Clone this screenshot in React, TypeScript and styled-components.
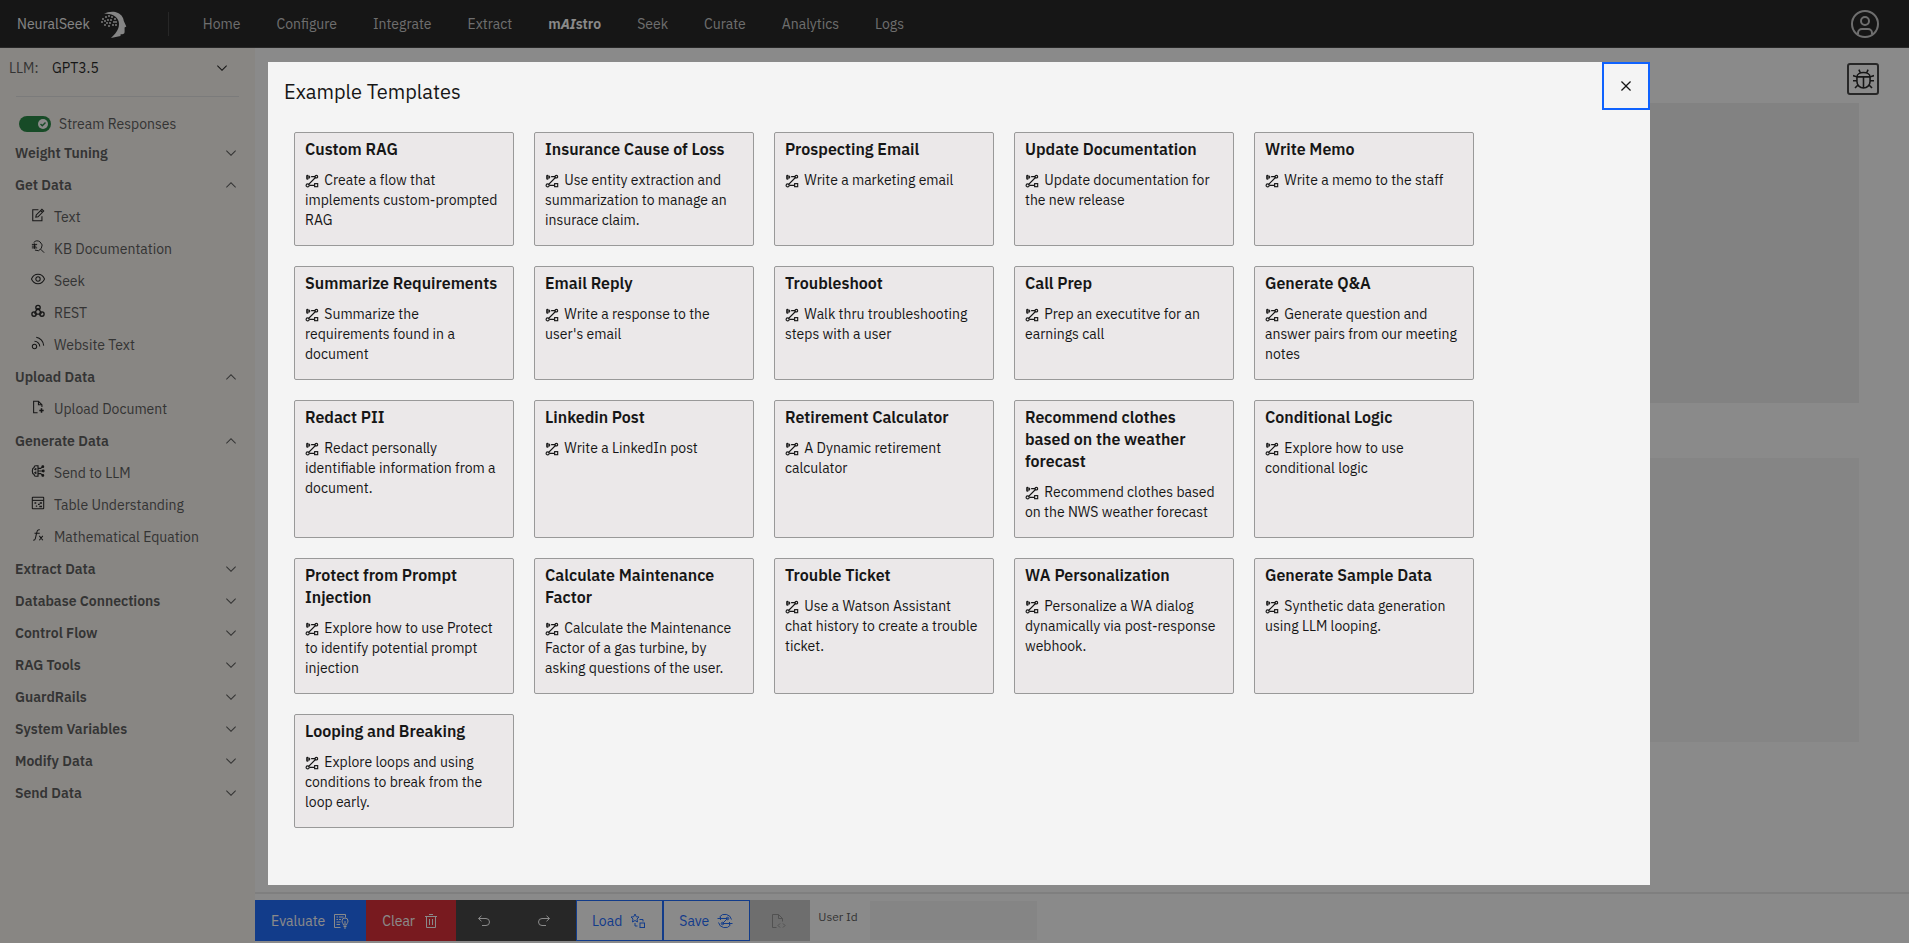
import React, { useState } from "react";
import styled, { createGlobalStyle, css } from "styled-components";

const GlobalStyle = createGlobalStyle`
  *, *::before, *::after { box-sizing: border-box; }
  body { margin: 0; background: #ffffff; }
  body, button, input, select, textarea {
    font-family: "IBM Plex Sans", Roboto, "Liberation Sans", sans-serif;
    font-size: 14px;
  }
  button { border: 0; background: none; padding: 0; color: inherit; cursor: pointer; }
  h2, h3, p, ul { margin: 0; padding: 0; }
  ul { list-style: none; }
`;

/* ---------- icons ---------- */

type IconName =
  | "edit" | "search" | "view" | "webhook" | "rss" | "docAdd" | "model" | "table" | "fx"
  | "evaluate" | "trash" | "undo" | "redo" | "load" | "save" | "docCode"
  | "close" | "down" | "up" | "user" | "bug" | "flow";

const icons: Record<IconName, React.ReactNode> = {
  edit: (
    <g fill="none" stroke="currentColor" strokeWidth="2.4">
      <path d="M17 4H4V29H25V19" />
      <path d="M11 21L12 16L25 3L29 7L16 20Z M22 6L26 10" />
    </g>
  ),
  search: (
    <g fill="none" stroke="currentColor" strokeWidth="2.2">
      <path d="M6 6A11 11 0 1 1 9 23" />
      <path d="M22 21L30 29" />
      <path d="M2 10H14M2 14H12M2 18H14M8 8V20" />
    </g>
  ),
  view: (
    <g fill="none" stroke="currentColor" strokeWidth="2.4">
      <path d="M1 16C4 9 10 5 16 5S28 9 31 16C28 23 22 27 16 27S4 23 1 16Z" />
      <circle cx="16" cy="16" r="5" />
    </g>
  ),
  webhook: (
    <g fill="none" stroke="currentColor" strokeWidth="3">
      <circle cx="16" cy="8" r="5" /><circle cx="7" cy="23" r="5" /><circle cx="25" cy="23" r="5" />
      <path d="M15 9L8 22M17 9L24 22M9 23H23" />
    </g>
  ),
  rss: (
    <g fill="none" stroke="currentColor" strokeWidth="2.4">
      <circle cx="8" cy="24" r="5" />
      <path d="M8 12A12 12 0 0 1 20 24M12 3A20 20 0 0 1 29 22" />
    </g>
  ),
  docAdd: (
    <g fill="none" stroke="currentColor" strokeWidth="2.4">
      <path d="M15 29H6V3H17L25 11V16" /><path d="M17 3V11H25" /><path d="M24 19V29M19 24H29" strokeWidth="3.5" />
    </g>
  ),
  model: (
    <g fill="none" stroke="currentColor" strokeWidth="2.6">
      <path d="M16 4H11C8 4 7 6 7 8C4 9 3 11 3 16S4 23 7 24C7 27 9 28 11 28H16ZM7 12H11M11 9V14M7 20H12M11 17V23" />
      <path d="M16 10H22L27 6M16 16H27M16 22H22L27 26" />
      <g fill="currentColor"><circle cx="27" cy="6" r="2" /><circle cx="28" cy="16" r="2" /><circle cx="27" cy="26" r="2" /></g>
    </g>
  ),
  table: (
    <g fill="none" stroke="currentColor" strokeWidth="2.4">
      <rect x="3" y="3" width="26" height="26" rx="1" /><path d="M3 10H29" />
      <path d="M8 16H12M16 19H20M20 16H25M11 23H14M19 24H25" strokeWidth="3" />
    </g>
  ),
  fx: (
    <g fill="none" stroke="currentColor" strokeWidth="2.4">
      <path d="M20 4H18C15 4 14 6 13.5 9L10 24C9.5 27 8 28 5 28M8 12H20M19 18L27 28M27 18L19 28" />
    </g>
  ),
  evaluate: (
    <g fill="none" stroke="currentColor" strokeWidth="2">
      <path d="M15 29H3V3H25V9" />
      <path d="M7 8H10M12 8H21M7 13H10M12 13H16M7 18H15M7 23H14" />
      <path d="M21 24C21 21 18 20 18 16A6 6 0 0 1 30 16C30 20 27 21 27 24ZM21 27H27M22 30H26M24 16V23" />
    </g>
  ),
  trash: (
    <g fill="currentColor">
      <path d="M12 12H14V24H12ZM18 12H20V24H18ZM12 2H20V4H12Z" />
      <path d="M4 6V8H6V28A2 2 0 0 0 8 30H24A2 2 0 0 0 26 28V8H28V6ZM8 28V8H24V28Z" />
    </g>
  ),
  undo: (
    <path fill="none" stroke="currentColor" strokeWidth="2" d="M11 5.5L5 11L11 16.5M5.5 11H20A7 7 0 0 1 20 25H12" />
  ),
  redo: (
    <path fill="none" stroke="currentColor" strokeWidth="2" d="M21 5.5L27 11L21 16.5M26.5 11H12A7 7 0 0 0 12 25H20" />
  ),
  load: (
    <g fill="none" stroke="currentColor" strokeWidth="2">
      <path d="M10 2L12.5 7.5L18 8L14 12L15 18L10 15L5 18L6 12L2 8L7.5 7.5Z" />
      <path d="M10 20V26H15M19 13H26V17" />
      <rect x="20" y="20" width="9" height="9" />
    </g>
  ),
  save: (
    <g fill="none" stroke="currentColor" strokeWidth="2">
      <path d="M5 8A13.5 13.5 0 0 1 29 13M27 24A13.5 13.5 0 0 1 3 19" />
      <path d="M1 11H21L11 21H31M7 8V14M25 18V24" />
      <circle cx="21" cy="11" r="2.5" /><circle cx="11" cy="21" r="2.5" />
    </g>
  ),
  docCode: (
    <g fill="none" stroke="currentColor" strokeWidth="2">
      <path d="M13 29H5V3H17L25 11V17M17 3V11H25M20 21L16 25L20 29M26 21L30 25L26 29" />
    </g>
  ),
  close: (
    <path fill="currentColor" d="M17.414 16L24 9.414L22.586 8L16 14.586L9.414 8L8 9.414L14.586 16L8 22.586L9.414 24L16 17.414L22.586 24L24 22.586Z" />
  ),
  down: <path fill="currentColor" d="M16 22L6 12L7.4 10.6L16 19.2L24.6 10.6L26 12Z" />,
  up: <path fill="currentColor" d="M16 10L26 20L24.6 21.4L16 12.8L7.4 21.4L6 20Z" />,
  user: (
    <g fill="none" stroke="currentColor" strokeWidth="2">
      <circle cx="16" cy="16" r="13" /><circle cx="16" cy="13" r="4" />
      <path d="M9 26V25A4 4 0 0 1 13 21H19A4 4 0 0 1 23 25V26" />
    </g>
  ),
  bug: (
    <g fill="none" stroke="currentColor" strokeWidth="2.4">
      <path d="M6 12C6 3 26 3 26 12V19A10 10 0 0 1 6 19ZM6 12H26M16 12V28M11 5.500L9 1M21 5.500L23 1" />
      <path d="M6 12L0 10M26 12L32 10M0 18H6M26 18H32M8 24L3 29M24 24L29 29" />
    </g>
  ),
  flow: (
    <g fill="none" stroke="currentColor" strokeWidth="2.6">
      <path d="M8 24L24 8M14 6H23M10 26H21M9 4L11 7L9 10" />
      <rect x="4" y="3" width="3" height="9" rx="1.500" />
      <circle cx="26" cy="6" r="3" /><circle cx="6" cy="26" r="3.5" /><rect x="22" y="22" width="7" height="7" />
    </g>
  ),
};

const Svg = styled.svg`
  display: block;
  flex: none;
`;

function Icon({ name, size = 16 }: { name: IconName; size?: number }) {
  return (
    <Svg width={size} height={size} viewBox="0 0 32 32" aria-hidden="true">
      {icons[name]}
    </Svg>
  );
}

const logoDots = [
  [3, 9], [6, 7], [9, 6], [12, 7], [15, 9], [5, 11], [8, 10], [11, 10], [14, 12], [2, 12],
  [7, 13], [10, 13], [16, 12], [13, 15], [5, 15], [9, 16], [16, 15],
];

function Logo() {
  return (
    <Svg width="28" height="28" viewBox="0 0 28 28" aria-hidden="true" fill="currentColor">
      <path d="M4 4C8 1.500 14 1 18 3C22 5 23.500 8 23.800 11L26.300 16.500L24.600 17.500V22C24.500 24.500 22 24 20.500 24.500L20.500 26L11 28C15 24 19 20 19 14C19 8 13 3 4 4Z" />
      {logoDots.map(([x, y]) => (
        <circle key={`${x}-${y}`} cx={x} cy={y} r={0.9} />
      ))}
    </Svg>
  );
}

/* ---------- header ---------- */

const Page = styled.div`
  display: flex;
  flex-direction: column;
  min-height: 100vh;
`;

const Header = styled.header`
  display: flex;
  align-items: center;
  height: 48px;
  padding: 0 28px 0 17px;
  background: #161616;
  border-bottom: 1px solid #393939;
  color: #c6c6c6;
`;

const Brand = styled.a`
  display: flex;
  align-items: center;
  gap: 10px;
  color: #f4f4f4;
  text-decoration: none;
`;

const HeaderRule = styled.span`
  width: 1px;
  height: 24px;
  margin: 0 34px 0 40px;
  background: #393939;
`;

const Nav = styled.nav`
  display: flex;
  flex: 1;
  gap: 36px;
`;

const NavLink = styled.a<{ $active?: boolean }>`
  color: ${(p) => (p.$active ? "#ffffff" : "#c6c6c6")};
  font-weight: ${(p) => (p.$active ? 600 : 400)};
  line-height: 18px;
  text-decoration: none;
`;

const Accent = styled.em`
  font-weight: 700;
`;

/* ---------- sidebar ---------- */

const Body = styled.div`
  display: flex;
  flex: 1;
`;

const Sidebar = styled.aside`
  width: 255px;
  flex: none;
  padding-top: 4px;
  background: #faf6f0;
  color: #525252;
`;

const ModelRow = styled.div`
  display: flex;
  align-items: center;
  height: 32px;
  padding: 0 25px 0 9px;
  color: #161616;
`;

const ModelLabel = styled.label`
  width: 43px;
  color: #525252;
`;

const ModelSelect = styled.select`
  appearance: none;
  flex: 1;
  height: 32px;
  padding: 0;
  border: 0;
  background: none;
  color: #161616;
`;

const Divider = styled.hr`
  height: 1px;
  margin: 12px 16px 14px;
  border: 0;
  background: #e0e0e0;
`;

const ToggleRow = styled.label`
  display: flex;
  align-items: center;
  gap: 8px;
  height: 26px;
  padding-left: 19px;
`;

const ToggleBox = styled.span`
  position: relative;
  display: flex;
  width: 32px;
  height: 16px;
`;

const ToggleInput = styled.input`
  appearance: none;
  width: 32px;
  height: 16px;
  margin: 0;
  border-radius: 8px;
  background: #8d8d8d;
  &:checked { background: #198038; }
`;

const ToggleKnob = styled.svg<{ $on: boolean }>`
  position: absolute;
  top: 3px;
  left: ${(p) => (p.$on ? "19px" : "3px")};
  pointer-events: none;
`;

const GroupButton = styled.button`
  display: flex;
  align-items: center;
  justify-content: space-between;
  width: 100%;
  height: 32px;
  padding: 0 16px 0 15px;
  font-weight: 600;
  text-align: left;
`;

const ItemButton = styled.button`
  display: flex;
  align-items: center;
  gap: 9px;
  width: 100%;
  height: 32px;
  padding-left: 31px;
  text-align: left;
`;

const ItemIcon = styled.span`
  padding-bottom: 4px;
  color: #161616;
`;

type Item = { icon: IconName; label: string };

const groups: { title: string; items?: Item[] }[] = [
  { title: "Weight Tuning" },
  {
    title: "Get Data",
    items: [
      { icon: "edit", label: "Text" },
      { icon: "search", label: "KB Documentation" },
      { icon: "view", label: "Seek" },
      { icon: "webhook", label: "REST" },
      { icon: "rss", label: "Website Text" },
    ],
  },
  { title: "Upload Data", items: [{ icon: "docAdd", label: "Upload Document" }] },
  {
    title: "Generate Data",
    items: [
      { icon: "model", label: "Send to LLM" },
      { icon: "table", label: "Table Understanding" },
      { icon: "fx", label: "Mathematical Equation" },
    ],
  },
  { title: "Extract Data" },
  { title: "Database Connections" },
  { title: "Control Flow" },
  { title: "RAG Tools" },
  { title: "GuardRails" },
  { title: "System Variables" },
  { title: "Modify Data" },
  { title: "Send Data" },
];

/* ---------- workspace ---------- */

const Workspace = styled.main`
  display: flex;
  flex: 1;
  flex-direction: column;
  min-width: 0;
  background: #ffffff;
`;

const Tools = styled.div`
  display: flex;
  justify-content: flex-end;
  padding: 15px 30px 8px 0;
`;

const BugButton = styled.button`
  display: grid;
  place-items: center;
  width: 32px;
  height: 32px;
  border: 2px solid #393939;
  border-radius: 3px;
  color: #161616;
`;

const Editors = styled.div`
  display: flex;
  flex: 1;
  flex-direction: column;
  gap: 55px;
  padding: 0 50px 0 16px;
`;

const Editor = styled.textarea<{ $rows: "tall" | "short" }>`
  display: block;
  width: 100%;
  height: ${(p) => (p.$rows === "tall" ? "300px" : "284px")};
  border: 0;
  resize: none;
  background: ${(p) => (p.$rows === "tall" ? "#efefef" : "#f4f4f4")};
`;

const Toolbar = styled.footer`
  display: flex;
  padding: 6px 0 2px;
  border-top: 2px solid #e8e8e8;
`;

type Tone = "primary" | "danger" | "dark" | "outline" | "disabled";

const iconOnly = css`
  width: 60px;
  padding: 0 18px 0 14px;
`;

const tones: Record<Tone, ReturnType<typeof css>> = {
  primary: css`background: #0f62fe; color: #ffffff;`,
  danger: css`background: #da1e28; color: #ffffff;`,
  dark: css`background: #393939; color: #ffffff; ${iconOnly}`,
  outline: css`background: #ffffff; color: #0f62fe; border: 1px solid #0f62fe; padding: 0 16px 0 15px;`,
  disabled: css`background: #c6c6c6; color: #8d8d8d; ${iconOnly}`,
};

const ToolButton = styled.button<{ $tone: Tone }>`
  display: flex;
  align-items: center;
  justify-content: center;
  gap: 8px;
  height: 41px;
  padding: 0 17px 0 16px;
  ${(p) => tones[p.$tone]}
`;

const UserLabel = styled.label`
  width: 60px;
  padding: 9px 0 0 8px;
  font-size: 12px;
  line-height: 16px;
  color: #525252;
`;

const UserInput = styled.input`
  width: 167px;
  height: 39px;
  margin-top: 1px;
  border: 0;
  background: #f4f4f4;
`;

/* ---------- modal ---------- */

const Overlay = styled.div`
  position: fixed;
  inset: 0;
  display: flex;
  padding: 62px 259px 58px 268px;
  background: rgba(22, 22, 22, 0.5);
`;

const Modal = styled.section`
  display: flex;
  flex: 1;
  flex-direction: column;
  min-width: 0;
  overflow: auto;
  background: #f4f4f4;
  color: #161616;
`;

const ModalHeader = styled.div`
  display: flex;
  justify-content: space-between;
  padding-left: 16px;
`;

const ModalTitle = styled.h2`
  padding-top: 16px;
  font-size: 20px;
  font-weight: 400;
  line-height: 28px;
`;

const CloseButton = styled.button`
  display: grid;
  place-items: center;
  width: 48px;
  height: 48px;
  border: 2px solid #0f62fe;
`;

const Grid = styled.div`
  display: grid;
  grid-template-columns: repeat(auto-fill, 220px);
  gap: 20px;
  padding: 22px 20px 20px 26px;
`;

const Card = styled.button`
  display: flex;
  flex-direction: column;
  gap: 10px;
  padding: 5px 14px 15px 10px;
  border: 1px solid #999999;
  border-radius: 2px;
  background: #ebe8e9;
  text-align: left;
`;

const CardTitle = styled.h3`
  font-size: 16px;
  font-weight: 600;
  line-height: 22px;
`;

const CardText = styled.p`
  line-height: 20px;
`;

const CardIcon = styled.span`
  display: inline-block;
  margin-right: 2px;
  vertical-align: -3px;
`;

const templates: [string, string][] = [
  ["Custom RAG", "Create a flow that implements custom-prompted RAG"],
  ["Insurance Cause of Loss", "Use entity extraction and summarization to manage an insurace claim."],
  ["Prospecting Email", "Write a marketing email"],
  ["Update Documentation", "Update documentation for the new release"],
  ["Write Memo", "Write a memo to the staff"],
  ["Summarize Requirements", "Summarize the requirements found in a document"],
  ["Email Reply", "Write a response to the user's email"],
  ["Troubleshoot", "Walk thru troubleshooting steps with a user"],
  ["Call Prep", "Prep an executitve for an earnings call"],
  ["Generate Q&A", "Generate question and answer pairs from our meeting notes"],
  ["Redact PII", "Redact personally identifiable information from a document."],
  ["Linkedin Post", "Write a LinkedIn post"],
  ["Retirement Calculator", "A Dynamic retirement calculator"],
  ["Recommend clothes based on the weather forecast", "Recommend clothes based on the NWS weather forecast"],
  ["Conditional Logic", "Explore how to use conditional logic"],
  ["Protect from Prompt Injection", "Explore how to use Protect to identify potential prompt injection"],
  ["Calculate Maintenance Factor", "Calculate the Maintenance Factor of a gas turbine, by asking questions of the user."],
  ["Trouble Ticket", "Use a Watson Assistant chat history to create a trouble ticket."],
  ["WA Personalization", "Personalize a WA dialog dynamically via post-response webhook."],
  ["Generate Sample Data", "Synthetic data generation using LLM looping."],
  ["Looping and Breaking", "Explore loops and using conditions to break from the loop early."],
];

function SideGroup({ title, items }: { title: string; items?: Item[] }) {
  const [open, setOpen] = useState(Boolean(items));
  return (
    <div>
      <GroupButton aria-expanded={open} onClick={() => setOpen(!open)}>
        {title}
        <Icon name={open ? "up" : "down"} />
      </GroupButton>
      {open && items && (
        <ul>
          {items.map((item) => (
            <li key={item.label}>
              <ItemButton>
                <ItemIcon><Icon name={item.icon} size={14} /></ItemIcon>
                {item.label}
              </ItemButton>
            </li>
          ))}
        </ul>
      )}
    </div>
  );
}

export default function App() {
  const [stream, setStream] = useState(true);
  const [showTemplates, setShowTemplates] = useState(true);

  return (
    <>
      <GlobalStyle />
      <Page>
        <Header>
          <Brand href="#">NeuralSeek <Logo /></Brand>
          <HeaderRule />
          <Nav>
            <NavLink href="#home">Home</NavLink>
            <NavLink href="#configure">Configure</NavLink>
            <NavLink href="#integrate">Integrate</NavLink>
            <NavLink href="#extract">Extract</NavLink>
            <NavLink href="#maistro" $active>m<Accent>AI</Accent>stro</NavLink>
            <NavLink href="#seek">Seek</NavLink>
            <NavLink href="#curate">Curate</NavLink>
            <NavLink href="#analytics">Analytics</NavLink>
            <NavLink href="#logs">Logs</NavLink>
          </Nav>
          <button aria-label="Account"><Icon name="user" size={32} /></button>
        </Header>

        <Body>
          <Sidebar>
            <ModelRow>
              <ModelLabel htmlFor="llm">LLM:</ModelLabel>
              <ModelSelect id="llm" defaultValue="gpt35">
                <option value="gpt35">GPT3.5</option>
              </ModelSelect>
              <Icon name="down" />
            </ModelRow>
            <Divider />
            <ToggleRow>
              <ToggleBox>
                <ToggleInput type="checkbox" checked={stream} onChange={() => setStream(!stream)} />
                <ToggleKnob $on={stream} width="10" height="10" viewBox="0 0 10 10" aria-hidden="true">
                  <circle cx="5" cy="5" r="5" fill="#ffffff" />
                  {stream && <path d="M2.5 5L4.3 6.8L7.5 3.5" fill="none" stroke="#198038" strokeWidth="1.4" />}
                </ToggleKnob>
              </ToggleBox>
              Stream Responses
            </ToggleRow>
            {groups.map((g) => (
              <SideGroup key={g.title} {...g} />
            ))}
          </Sidebar>

          <Workspace>
            <Tools>
              <BugButton aria-label="Debug"><Icon name="bug" size={21} /></BugButton>
            </Tools>
            <Editors>
              <Editor $rows="tall" aria-label="Flow" />
              <Editor $rows="short" aria-label="Output" />
            </Editors>
            <Toolbar>
              <ToolButton $tone="primary">Evaluate <Icon name="evaluate" /></ToolButton>
              <ToolButton $tone="danger">Clear <Icon name="trash" /></ToolButton>
              <ToolButton $tone="dark" aria-label="Undo"><Icon name="undo" /></ToolButton>
              <ToolButton $tone="dark" aria-label="Redo"><Icon name="redo" /></ToolButton>
              <ToolButton $tone="outline">Load <Icon name="load" /></ToolButton>
              <ToolButton $tone="outline">Save <Icon name="save" /></ToolButton>
              <ToolButton $tone="disabled" aria-label="Export" disabled><Icon name="docCode" /></ToolButton>
              <UserLabel htmlFor="user-id">User Id</UserLabel>
              <UserInput id="user-id" type="text" />
            </Toolbar>
          </Workspace>
        </Body>
      </Page>

      {showTemplates && (
        <Overlay>
          <Modal role="dialog" aria-modal="true" aria-labelledby="templates-title">
            <ModalHeader>
              <ModalTitle id="templates-title">Example Templates</ModalTitle>
              <CloseButton aria-label="Close" onClick={() => setShowTemplates(false)}>
                <Icon name="close" size={20} />
              </CloseButton>
            </ModalHeader>
            <Grid>
              {templates.map(([title, text]) => (
                <Card key={title}>
                  <CardTitle>{title}</CardTitle>
                  <CardText>
                    <CardIcon><Icon name="flow" size={14} /></CardIcon> {text}
                  </CardText>
                </Card>
              ))}
            </Grid>
          </Modal>
        </Overlay>
      )}
    </>
  );
}
